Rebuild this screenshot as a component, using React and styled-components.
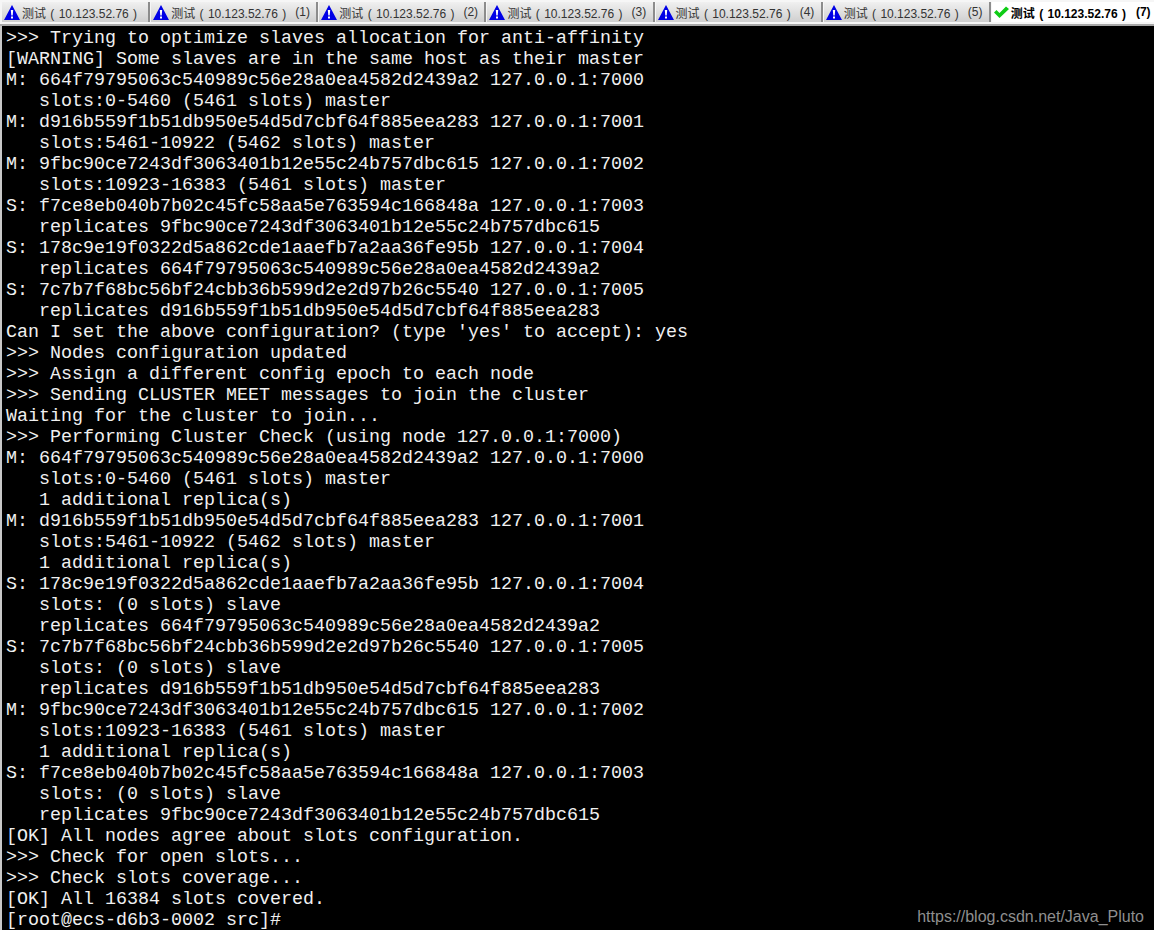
import React from "react";
import styled, { createGlobalStyle } from "styled-components";

const GlobalStyle = createGlobalStyle`
  html, body { margin: 0; padding: 0; background: #000; }
  body { width: 1154px; height: 930px; overflow: hidden; }
`;

const tabs = [
  { count: "", width: 149 },
  { count: "(1)", width: 168 },
  { count: "(2)", width: 168 },
  { count: "(3)", width: 168 },
  { count: "(4)", width: 168 },
  { count: "(5)", width: 168 },
  { count: "(7)", width: 163, active: true },
];

const lines = `>>> Trying to optimize slaves allocation for anti-affinity
[WARNING] Some slaves are in the same host as their master
M: 664f79795063c540989c56e28a0ea4582d2439a2 127.0.0.1:7000
   slots:0-5460 (5461 slots) master
M: d916b559f1b51db950e54d5d7cbf64f885eea283 127.0.0.1:7001
   slots:5461-10922 (5462 slots) master
M: 9fbc90ce7243df3063401b12e55c24b757dbc615 127.0.0.1:7002
   slots:10923-16383 (5461 slots) master
S: f7ce8eb040b7b02c45fc58aa5e763594c166848a 127.0.0.1:7003
   replicates 9fbc90ce7243df3063401b12e55c24b757dbc615
S: 178c9e19f0322d5a862cde1aaefb7a2aa36fe95b 127.0.0.1:7004
   replicates 664f79795063c540989c56e28a0ea4582d2439a2
S: 7c7b7f68bc56bf24cbb36b599d2e2d97b26c5540 127.0.0.1:7005
   replicates d916b559f1b51db950e54d5d7cbf64f885eea283
Can I set the above configuration? (type 'yes' to accept): yes
>>> Nodes configuration updated
>>> Assign a different config epoch to each node
>>> Sending CLUSTER MEET messages to join the cluster
Waiting for the cluster to join...
>>> Performing Cluster Check (using node 127.0.0.1:7000)
M: 664f79795063c540989c56e28a0ea4582d2439a2 127.0.0.1:7000
   slots:0-5460 (5461 slots) master
   1 additional replica(s)
M: d916b559f1b51db950e54d5d7cbf64f885eea283 127.0.0.1:7001
   slots:5461-10922 (5462 slots) master
   1 additional replica(s)
S: 178c9e19f0322d5a862cde1aaefb7a2aa36fe95b 127.0.0.1:7004
   slots: (0 slots) slave
   replicates 664f79795063c540989c56e28a0ea4582d2439a2
S: 7c7b7f68bc56bf24cbb36b599d2e2d97b26c5540 127.0.0.1:7005
   slots: (0 slots) slave
   replicates d916b559f1b51db950e54d5d7cbf64f885eea283
M: 9fbc90ce7243df3063401b12e55c24b757dbc615 127.0.0.1:7002
   slots:10923-16383 (5461 slots) master
   1 additional replica(s)
S: f7ce8eb040b7b02c45fc58aa5e763594c166848a 127.0.0.1:7003
   slots: (0 slots) slave
   replicates 9fbc90ce7243df3063401b12e55c24b757dbc615
[OK] All nodes agree about slots configuration.
>>> Check for open slots...
>>> Check slots coverage...
[OK] All 16384 slots covered.
[root@ecs-d6b3-0002 src]#`.split("\n");

function WarnIcon() {
  return (
    <svg width="16" height="15" viewBox="0 0 16 15">
      <path d="M8 0 L16 15 L0 15 Z" fill="#0000e6" />
      <path d="M6.8 5 H9.2 L8.7 10.5 H7.3 Z" fill="#fff" />
      <rect x="7" y="11.5" width="2" height="2" fill="#fff" />
    </svg>
  );
}

function CheckIcon() {
  return (
    <svg width="15" height="12" viewBox="0 0 15 12">
      <path d="M0 6.5 L2.5 4 L5.5 7 L12 0.5 L15 3 L5.5 12 Z" fill="#0fcc16" />
    </svg>
  );
}

export default function App() {
  return (
    <Page>
      <GlobalStyle />
      <TabBar>
        {tabs.map((tab, idx) => (
          <Tab key={idx} $width={tab.width} $active={tab.active}>
            {tab.active ? <CheckIcon /> : <WarnIcon />}
            <TabTitle>测试 ( 10.123.52.76 )</TabTitle>
            {tab.count && <TabCount $active={tab.active}>{tab.count}</TabCount>}
          </Tab>
        ))}
      </TabBar>
      <Terminal>
        {lines.map((line, idx) => (
          <Line key={idx}>{line}</Line>
        ))}
        <Watermark>https://blog.csdn.net/Java_Pluto</Watermark>
      </Terminal>
    </Page>
  );
}

const Page = styled.div`
  width: 1154px;
  height: 930px;
  display: flex;
  flex-direction: column;
  overflow: hidden;
  background: #000;
`;

const TabBar = styled.div`
  height: 22px;
  padding: 2px 0 0 2px;
  display: flex;
  gap: 1px;
  background: #f6f6f6;
  border-bottom: 2px solid #a8a8a8;
  flex-shrink: 0;
`;

const Tab = styled.div`
  width: ${(p) => p.$width}px;
  height: 20px;
  display: flex;
  align-items: center;
  gap: 2px;
  padding-left: 2px;
  box-sizing: border-box;
  font-family: "Liberation Sans", "Noto Sans CJK SC", sans-serif;
  font-size: 12px;
  color: ${(p) => (p.$active ? "#000" : "#333")};
  font-weight: ${(p) => (p.$active ? 700 : 400)};
  background: ${(p) => (p.$active ? "#fff" : "linear-gradient(#f0f0f0, #cfcfcf)")};
  border-right: 2px solid ${(p) => (p.$active ? "#fff" : "#8c8c8c")};
`;

const TabTitle = styled.span`
  white-space: pre;
  word-spacing: 1px;
`;

const TabCount = styled.span`
  margin-left: ${(p) => (p.$active ? 8 : 7)}px;
`;

const Terminal = styled.div`
  position: relative;
  flex: 1;
  padding: 2px 0 0 4px;
  background: #000;
  border-left: 2px solid #c8c8c8;
  font-family: "Liberation Mono", monospace;
  font-size: 18.33px;
  line-height: 21px;
  color: #f0f0f0;
`;

const Line = styled.div`
  height: 21px;
  white-space: pre;
`;

const Watermark = styled.div`
  position: absolute;
  right: 10px;
  bottom: 4px;
  font-family: "Liberation Sans", sans-serif;
  font-size: 16px;
  line-height: 20px;
  color: #8f8f8f;
`;
